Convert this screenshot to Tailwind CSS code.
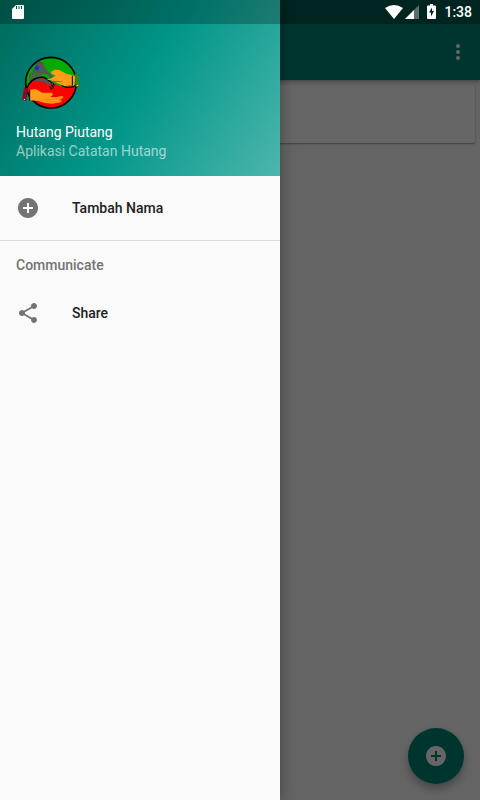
<!DOCTYPE html>
<html lang="id">
<head>
    <meta charset="UTF-8">
    <meta name="viewport" content="width=device-width, initial-scale=1.0">
    <title>Hutang Piutang</title>
    <script src="https://cdn.jsdelivr.net/npm/@tailwindcss/browser@4"></script>
</head>
<body class="relative min-h-screen overflow-hidden bg-[#fafafa] font-[Roboto,sans-serif] text-sm">
    <!-- Main screen -->
    <div class="h-6 bg-[#005b50]"></div>
    <header class="flex h-14 items-center justify-end bg-[#008577] pr-2.5 shadow-[0_2px_4px_rgba(0,0,0,0.3)]">
        <button class="flex h-10 w-6 items-center justify-center" aria-label="Menu">
            <svg class="size-6 fill-white" viewBox="0 0 24 24"><circle cx="12" cy="6" r="2"/><circle cx="12" cy="12" r="2"/><circle cx="12" cy="18" r="2"/></svg>
        </button>
    </header>
    <main class="p-[5px]">
        <div class="h-[58px] rounded-xs bg-white shadow-[0_1px_2px_rgba(0,0,0,0.35),0_0_1px_rgba(0,0,0,0.3)]"></div>
    </main>
    <button class="absolute right-4 bottom-4 flex size-14 items-center justify-center rounded-full bg-[#008577] shadow-[0_5px_8px_rgba(0,0,0,0.3)]" aria-label="Tambah">
        <svg class="size-6 fill-white" viewBox="0 0 24 24"><path d="M12 2C6.48 2 2 6.48 2 12s4.48 10 10 10 10-4.48 10-10S17.52 2 12 2zm5 11h-4v4h-2v-4H7v-2h4V7h2v4h4v2z"/></svg>
    </button>

    <!-- Scrim -->
    <div class="absolute inset-0 bg-black/60"></div>

    <!-- Navigation drawer -->
    <aside class="absolute inset-y-0 left-0 w-[280px] bg-[#fafafa] shadow-[0_0_14px_rgba(0,0,0,0.35)]">
        <div class="flex h-44 flex-col bg-linear-122/srgb from-[#00695c] via-[#009688] to-[#4db6ac] px-4 pt-12">
            <svg class="h-[68px] w-[72px] shrink-0" viewBox="0 0 216 204" role="img" aria-label="Logo Hutang Piutang">
                <circle cx="105" cy="104" r="76" fill="#00ac00"/>
                <path d="M31 126C35 101 55 89 79 88C102 93 113 110 135 115C154 119 169 110 180 112C173 155 140 180 105 180C63 181 36 155 31 126z" fill="#ff0000"/>
                <path d="M49 72L57 51L68 39L80 43L91 65L111 86L105 93L92 79L78 78L64 88L50 102L40 98L40 78z" fill="#555"/>
                <path d="M65 90L90 92L108 100L118 108L112 116L104 106L96 113L89 104L69 99L54 99z" fill="#555"/>
                <path d="M59 70L49 98M50 72L42 92M68 74L58 92" stroke="#00ac00" stroke-width="2" fill="none"/>
                <path d="M57 59l4-6 6 1 2 6-4 7-7-1z" fill="#0038c8"/>
                <path d="M33 123C38 101 56 89 79 87C90 87 96 99 109 105" fill="none" stroke="#000" stroke-width="4"/>
                <path d="M101 115l7 9M106 110l7 10M111 106l4 7M137 112l14 6 15 0 13-6" stroke="#000" stroke-width="4" fill="none"/>
                <circle cx="105" cy="104" r="76" fill="none" stroke="#000" stroke-width="5"/>
                <path d="M91 95L106 91L119 83L104 76L107 70L116 65L130 66L152 78L178 83L175 113L159 112L147 115L128 107L105 97z" fill="#ff9c18"/>
                <path d="M139 102l-19-2-16 0" stroke="#00ac00" stroke-width="2"/>
                <path d="M39 126L59 123L79 134L108 134L111 140L103 147L121 148L139 143L142 149L128 157L139 158L133 163L108 167L87 165L67 159L40 157z" fill="#ff9c18"/>
                <path d="M82 153l28 3 26-9M90 161l25 1 20-7" stroke="#ff7800" stroke-width="2" fill="none"/>
                <path d="M169 83v30M41 125v33" stroke="#000" stroke-width="3"/>
                <path d="M176 78L186 79L190 118L179 116z" fill="#398500"/>
                <path d="M24 119L35 121L31 158L18 156z" fill="#98001f"/>
                <circle cx="184" cy="112" r="2" fill="#fff"/><circle cx="25" cy="154" r="2" fill="#fff"/>
            </svg>
            <p class="mt-1.5 leading-5 text-white">Hutang Piutang</p>
            <p class="leading-[18px] text-white/60">Aplikasi Catatan Hutang</p>
        </div>
        <nav class="font-medium text-[#212121]">
            <a href="#" class="flex h-16 items-center gap-8 px-4">
                <svg class="size-6 fill-[#737373]" viewBox="0 0 24 24"><path d="M12 2C6.48 2 2 6.48 2 12s4.48 10 10 10 10-4.48 10-10S17.52 2 12 2zm5 11h-4v4h-2v-4H7v-2h4V7h2v4h4v2z"/></svg>
                <span>Tambah Nama</span>
            </a>
            <hr class="border-[#dadada]">
            <h2 class="flex h-12 items-center px-4 text-[#737373]">Communicate</h2>
            <a href="#" class="flex h-12 items-center gap-8 px-4">
                <svg class="size-6 fill-[#737373]" viewBox="0 0 24 24"><path d="M18 16.08c-.76 0-1.44.3-1.96.77L8.91 12.7c.05-.23.09-.46.09-.7s-.04-.47-.09-.7l7.05-4.11c.54.5 1.25.81 2.04.81 1.66 0 3-1.34 3-3s-1.34-3-3-3-3 1.34-3 3c0 .24.04.47.09.7L8.04 9.81C7.5 9.31 6.79 9 6 9c-1.66 0-3 1.34-3 3s1.34 3 3 3c.79 0 1.5-.31 2.04-.81l7.12 4.16c-.05.21-.08.43-.08.65 0 1.61 1.31 2.92 2.92 2.92s2.92-1.31 2.92-2.92-1.31-2.92-2.92-2.92z"/></svg>
                <span>Share</span>
            </a>
        </nav>
    </aside>

    <!-- Status bar -->
    <div class="absolute inset-x-0 top-0 flex h-6 items-center justify-between pr-2 pl-3 text-white">
        <div class="absolute inset-y-0 left-0 w-[280px] bg-black/25"></div>
        <svg class="relative h-[14px] w-3" viewBox="0 0 12 14"><path fill="#fff" fill-rule="evenodd" d="M4 0h7q1 0 1 1v12q0 1-1 1H1q-1 0-1-1V4zM4 1v3h1V1zM6.500 1v3h1V1zM9 1v3h1V1z"/></svg>
        <div class="flex items-center">
            <svg class="h-[14px] w-[18px]" viewBox="0 0 18 14"><path fill="#fff" d="M0 3Q9-3 18 3L9 14z"/></svg>
            <svg class="mr-2 ml-0.5 size-[14px]" viewBox="0 0 14 14"><path fill="#fff" fill-opacity=".35" d="M14 0v14H0z"/><path fill="#fff" d="M9 5v9H0z"/></svg>
            <svg class="mr-2 mb-0.5 h-[15px] w-[9px]" viewBox="0 0 9 15"><path fill="#fff" fill-rule="evenodd" d="M3 0h3v1.500h2q1 0 1 1V14q0 1-1 1H1q-1 0-1-1V2.500q0-1 1-1h2zM5 3.500L2 8.500h2v4l3-5.500H5z"/></svg>
            <time class="font-medium leading-6">1:38</time>
        </div>
    </div>
</body>
</html>
